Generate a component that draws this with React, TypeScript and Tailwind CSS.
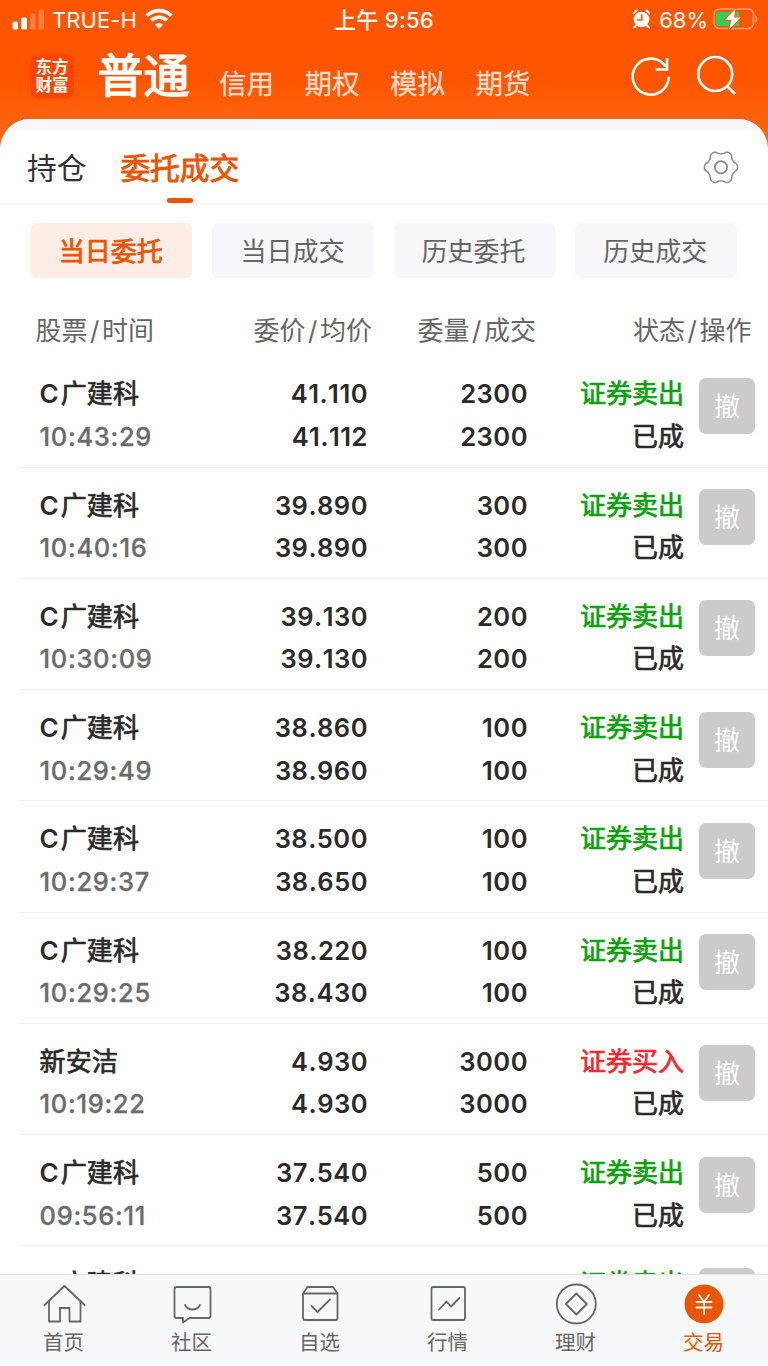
import React from 'react';

type Order = {
  name: string;
  time: string;
  price: string;
  avg: string;
  qty: string;
  filled: string;
  buy?: boolean;
};

const orders: Order[] = [
  { name: 'C广建科', time: '10:43:29', price: '41.110', avg: '41.112', qty: '2300', filled: '2300' },
  { name: 'C广建科', time: '10:40:16', price: '39.890', avg: '39.890', qty: '300', filled: '300' },
  { name: 'C广建科', time: '10:30:09', price: '39.130', avg: '39.130', qty: '200', filled: '200' },
  { name: 'C广建科', time: '10:29:49', price: '38.860', avg: '38.960', qty: '100', filled: '100' },
  { name: 'C广建科', time: '10:29:37', price: '38.500', avg: '38.650', qty: '100', filled: '100' },
  { name: 'C广建科', time: '10:29:25', price: '38.220', avg: '38.430', qty: '100', filled: '100' },
  { name: '新安洁', time: '10:19:22', price: '4.930', avg: '4.930', qty: '3000', filled: '3000', buy: true },
  { name: 'C广建科', time: '09:56:11', price: '37.540', avg: '37.540', qty: '500', filled: '500' },
  { name: 'C广建科', time: '09:55:40', price: '38.020', avg: '38.020', qty: '300', filled: '300' },
];

// Outline of a soft six-lobed gear centred on (18, 18).
const gearPath =
  Array.from({ length: 144 }, (_, i) => {
    const t = (i / 144) * Math.PI * 2;
    const r = 15.1 + 1.65 * Math.cos(6 * t) - 0.18 * Math.cos(18 * t);
    return (i ? 'L' : 'M') + (18 + r * Math.cos(t)).toFixed(2) + ' ' + (18 + r * Math.sin(t)).toFixed(2);
  }).join('') + 'Z';

function StatusBar() {
  return (
    <div className="grid h-10 grid-cols-3 items-center text-[22px] leading-none text-white">
      <div className="flex items-center pl-3">
        <svg width="33" height="22" viewBox="0 0 33 22" fill="#fff">
          <rect x="0.5" y="12.5" width="5.5" height="8" rx="1.5" />
          <rect x="9" y="8.5" width="6" height="12" rx="1.5" />
          <rect x="18" y="4.5" width="5.5" height="16" rx="1.5" opacity="0.25" />
          <rect x="26.5" y="0.5" width="5.5" height="20" rx="1.5" opacity="0.25" />
        </svg>
        <span className="ml-[7px] tracking-[0.1px]">TRUE-H</span>
        <svg className="-mt-[2px] ml-[8px]" width="28" height="22" viewBox="0 0 28 22" fill="none" stroke="#fff">
          <path d="M1.7 7.600a17.500 17.500 0 0 1 24.600 0" strokeWidth="3.800" />
          <path d="M6.200 12.400a11.200 11.200 0 0 1 15.600 0" strokeWidth="3.600" />
          <path d="M14 21l-4-4.300a5.700 5.700 0 0 1 8 0z" fill="#fff" stroke="none" />
        </svg>
      </div>
      <div className="text-center font-medium tracking-[0.3px]">
        <span className="font-normal [-webkit-text-stroke:0.4px]">上午</span> 9:56
      </div>
      <div className="flex items-center justify-end pr-[10px]">
        <svg className="-mt-[2px]" width="18" height="20" viewBox="0 0 18 20" fill="none">
          <circle cx="9.500" cy="10.500" r="7.800" fill="#fff" />
          <path d="M9.800 5.500v5.500H5" stroke="#ff5800" strokeWidth="1.600" />
          <path d="M1.500 4.500l3-3M17.500 4.500l-3-3M4 16.500L2 18.500M15 16.500l2 2" stroke="#fff" strokeWidth="2" strokeLinecap="round" />
        </svg>
        <span className="ml-[9px] mr-[5px]">68%</span>
        <svg className="-mt-[2px]" width="45" height="24" viewBox="0 0 45 24" fill="none">
          <rect x="1" y="2" width="39.500" height="19.500" rx="5.500" stroke="#fff" strokeOpacity="0.450" strokeWidth="1.700" />
          <path d="M42.500 8.500c2.500 1 2.500 6 0 7z" fill="#fff" opacity="0.500" />
          <path d="M6 5h20v14H6a3 3 0 0 1-3-3V8a3 3 0 0 1 3-3z" fill="#30d158" />
          <path d="M22.500 1.500L12 13h6.500l-2.500 9.500L27.500 10.500H21z" fill="#fff" stroke="#ff5800" strokeWidth="2" paintOrder="stroke" />
        </svg>
      </div>
    </div>
  );
}

function Header() {
  return (
    <div className="flex h-[79px] pl-[30px] text-white">
      <div className="mt-[14px] flex h-[45px] w-[44px] flex-col items-center justify-center rounded-[9px] bg-[#ff4500] pb-[1px] text-[16.500px] font-bold leading-[18.500px]">
        <span>东方</span>
        <span>财富</span>
      </div>
      <div className="ml-[23.500px] mt-[4px] text-[46px] leading-[62px] [-webkit-text-stroke:1.400px]">普通</div>
      <div className="ml-[29.500px] mt-[28.500px] flex gap-[30.500px] text-[27.500px] leading-[30px] text-[#ffdccb] [-webkit-text-stroke:0.300px]">
        <span>信用</span>
        <span>期权</span>
        <span>模拟</span>
        <span>期货</span>
      </div>
      <svg className="ml-[99.500px] mt-[15px]" width="42" height="42" viewBox="0 0 42 42" fill="none" stroke="#fff" strokeWidth="2.600">
        <path d="M38.700 21.800A18 18 0 1 1 35.800 11.800" />
        <path d="M37 3v11.500H25.500" />
      </svg>
      <svg className="ml-[24px] mt-[15px]" width="42" height="42" viewBox="0 0 42 42" fill="none" stroke="#fff" strokeWidth="2.600">
        <circle cx="19.200" cy="19" r="17" />
        <path d="M31 31l8 8" />
      </svg>
    </div>
  );
}

function MainTabs() {
  return (
    <div className="flex h-[75px] items-start border-b-2 border-[#f8f8f9] pl-[27px] pr-[29px]">
      <div className="pt-[16px] text-[29.700px] leading-[44px] text-[#333]">持仓</div>
      <div className="ml-[34px] flex flex-col items-center pt-[15.500px]">
        <span className="text-[29.700px] leading-[44px] text-[#ea5504] [-webkit-text-stroke:0.900px]">委托成交</span>
        <span className="mt-[8px] h-[5.500px] w-[26px] rounded-[2px] bg-[#ea5504]" />
      </div>
      <svg className="ml-auto mt-[19px]" width="36" height="36" viewBox="0 0 36 36" fill="none" stroke="#8b8b8b" strokeWidth="1.500" strokeLinejoin="round">
        <circle cx="18" cy="18.300" r="6.100" strokeWidth="1.800" />
        <path d={gearPath} transform="translate(0 .3)" />
      </svg>
    </div>
  );
}

function Chips() {
  const base = 'flex h-[55px] items-center justify-center rounded-[6px] pt-[2px] text-[26px]';
  return (
    <div className="grid grid-cols-4 gap-[20px] pl-[30.500px] pr-[31px] pt-[18px]">
      <div className={base + ' bg-[#fdede6] pr-[1px] text-[#ea5504] [-webkit-text-stroke:0.800px]'}>当日委托</div>
      <div className={base + ' bg-[#f7f7fa] pr-[1px] text-[#666]'}>当日成交</div>
      <div className={base + ' bg-[#f7f7fa] pr-[2px] text-[#666]'}>历史委托</div>
      <div className={base + ' bg-[#f7f7fa] pr-[2px] text-[#666]'}>历史成交</div>
    </div>
  );
}

function Pair({ a, b }: { a: string; b: string }) {
  return (
    <div className="text-right">
      {a}
      <span className="mx-[2.500px]">/</span>
      {b}
    </div>
  );
}

function ColumnHeads() {
  return (
    <div className="grid h-[78.250px] grid-cols-[119px_218px_164px_215.500px] items-center pl-[35px] pt-[28px] text-[26px] leading-[26px] text-[#666]">
      <Pair a="股票" b="时间" />
      <Pair a="委价" b="均价" />
      <Pair a="委量" b="成交" />
      <Pair a="状态" b="操作" />
    </div>
  );
}

function OrderName({ name }: { name: string }) {
  const latin = name.startsWith('C');
  return (
    <div className="font-normal">
      {latin && <span className="mr-[2px] font-semibold">C</span>}
      <span className="tracking-[0.200px] [-webkit-text-stroke:0.700px]">{latin ? name.slice(1) : name}</span>
    </div>
  );
}

function OrderRow({ o }: { o: Order }) {
  return (
    <div className="ml-[19px] grid h-[111.250px] shrink-0 grid-cols-[148px_180.500px_160px_156px_56px] border-b border-[#f1f1f2] pl-[20.500px] pt-[17px] text-[26px] font-semibold leading-[42.700px] text-[#2a2a2a] [font-kerning:none]">
      <div>
        <OrderName name={o.name} />
        <div className="text-[25.500px] font-medium tracking-[0.700px] text-[#6b6b6b] [-webkit-text-stroke:0.300px]">{o.time}</div>
      </div>
      <div className="text-right text-[25.500px] tracking-[0.500px]">
        <div>{o.price}</div>
        <div>{o.avg}</div>
      </div>
      <div className="text-right text-[25.500px] tracking-[0.500px]">
        <div>{o.qty}</div>
        <div>{o.filled}</div>
      </div>
      <div className="text-right font-normal [-webkit-text-stroke:0.700px]">
        <div className={o.buy ? 'text-[#f4252c]' : 'text-[#0aa00a]'}>{o.buy ? '证券买入' : '证券卖出'}</div>
        <div>已成</div>
      </div>
      <div className="ml-[15px] mt-[4.500px] flex h-[56px] w-[56px] items-center justify-center rounded-[7px] bg-[#cbcbcb] pt-[3px] font-normal text-white">撤</div>
    </div>
  );
}

function NavItem({ label, active, children }: { label: string; active?: boolean; children: React.ReactNode }) {
  return (
    <div className={'flex flex-col items-center pr-[1px] ' + (active ? 'text-[#ea5504]' : 'text-[#666]')}>
      <svg className="mt-[8px]" width="44" height="44" viewBox="0 0 44 44" fill="none" stroke="currentColor" strokeWidth="1.800" strokeLinejoin="round" strokeLinecap="round">
        {children}
      </svg>
      <span className="mt-[5px] text-[20.500px] leading-[22px]">{label}</span>
    </div>
  );
}

function BottomNav() {
  return (
    <div className="grid h-[91px] grid-cols-6 border-t border-[#e3e4e8] bg-[#f7f8fa]">
      <NavItem label="首页">
        <path d="M2.500 22L22.500 3l20 19" />
        <path d="M7 18v20.500h11V25h9.500v13.500h11V18" />
      </NavItem>
      <NavItem label="社区">
        <path d="M6.500 4h32q2 0 2 2v27q0 2-2 2H19.500l-6.500 4.500V35H6.500q-2 0-2-2V6q0-2 2-2z" />
        <path d="M15 22c3 6 12 6 15 0" />
      </NavItem>
      <NavItem label="自选">
        <path d="M5 10.500L9.500 4h25.500l4.500 6.500V35q0 2-2 2H7q-2 0-2-2zM5 10.500h34.500" />
        <path d="M13.500 23l6 6 12.500-12.500" />
      </NavItem>
      <NavItem label="行情">
        <rect x="5.500" y="4" width="33.500" height="33" rx="1.500" />
        <path d="M13 26.500l7.500-8 4.500 5 8.500-8.500" />
      </NavItem>
      <NavItem label="理财">
        <circle cx="22.300" cy="21" r="19.500" />
        <path d="M22.300 10.500L32.800 21 22.300 31.500 11.800 21z" />
      </NavItem>
      <NavItem label="交易" active>
        <circle cx="22" cy="21" r="19.500" fill="currentColor" stroke="none" />
        <path d="M17 12l5 7 5-7M22 19v12M14.500 19h15M14.500 24.500h15" stroke="#fff" strokeWidth="1.800" />
      </NavItem>
    </div>
  );
}

export default function App() {
  return (
    <div className="flex h-[1366px] w-[768px] flex-col overflow-hidden bg-white font-[Inter,'Noto_Sans_CJK_SC',sans-serif]">
      <div className="bg-linear-to-b from-[#ff5500] from-40% to-[#ff6a14] to-70%">
        <StatusBar />
        <Header />
        <div className="h-[86px] overflow-hidden rounded-t-[30px] bg-white">
          <div className="h-[11px] bg-[#f7f8fa]" />
          <MainTabs />
        </div>
      </div>
      <Chips />
      <ColumnHeads />
      <div className="flex min-h-0 flex-1 flex-col overflow-hidden">
        {orders.map((o, i) => (
          <OrderRow key={i} o={o} />
        ))}
      </div>
      <BottomNav />
      <div className="h-px bg-white" />
    </div>
  );
}
